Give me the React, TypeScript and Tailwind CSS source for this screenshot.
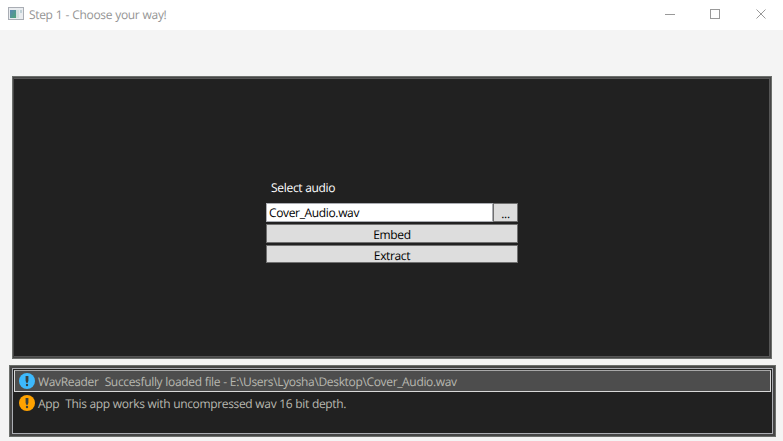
const font = "font-['Open_Sans','Noto_Sans',sans-serif] text-[12px] leading-4 whitespace-pre [text-rendering:geometricPrecision]";

function InfoIcon({ color }: { color: string }) {
  return (
    <svg width="16" height="16" viewBox="0 0 16 16" className="shrink-0">
      <circle cx="8" cy="8" r="8" fill={color} />
      <path d="M6.6 3h2.8v4.2L8.9 9.8H7.1L6.6 7.2z" fill="#38403f" />
      <circle cx="8" cy="12" r="1.2" fill="#38403f" />
    </svg>
  );
}

function WindowIcon() {
  return (
    <svg width="16" height="14" viewBox="0 0 16 14" className="shrink-0" shapeRendering="crispEdges">
      <defs>
        <linearGradient id="pane" x1="0" y1="0" x2="1" y2="1">
          <stop offset="0" stopColor="#5b86b5" />
          <stop offset="1" stopColor="#4fa577" />
        </linearGradient>
      </defs>
      <rect width="16" height="13" fill="#a9adb4" />
      <rect x="1" y="1" width="14" height="11" fill="#e9ecef" />
      <rect x="2" y="3" width="6" height="8" fill="url(#pane)" />
      <rect x="8" y="3" width="3" height="8" fill="#d5dfdf" />
      <rect x="12" y="3" width="2" height="3" fill="#bfd0d6" />
    </svg>
  );
}

function TitleBar() {
  return (
    <header className="flex h-[30px] items-start bg-white pl-2 text-[#949494]">
      <div className="pt-[7px]"><WindowIcon /></div>
      <h1 className={`${font} ml-[5px] mt-[7px] tracking-[-0.33px] [word-spacing:0.4px]`}>Step 1 - Choose your way!</h1>
      <svg width="102" height="10" viewBox="0 0 102 10" className="ml-auto mr-[16px] mt-[9px]" fill="none" stroke="#999">
        <path d="M0 5.5h10M45.5.5h9v9h-9z" shapeRendering="crispEdges" />
        <path d="M91.5.5l9 9M100.5.5l-9 9" />
      </svg>
    </header>
  );
}

export default function App() {
  return (
    <div className="flex h-[441px] w-[783px] flex-col overflow-hidden bg-[#f4f4f4]">
      <TitleBar />
      <main className="ml-3 mt-[46px] h-[283px] w-[760px] border border-[#6c6f6c] bg-[#212121]">
        <div className="h-full border border-[#464646]">
          <div className="h-full border border-l-0 border-[#565656] pl-[252px] pt-[101px]">
            <div className={`${font} h-[23px] pl-[5px] tracking-[-0.3px] text-white`}>Select audio</div>
            <div className="flex h-[19px] w-[252px]">
              <div className={`${font} w-[227px] border border-[#abadb3] bg-white pl-[2px] pt-px tracking-[-0.35px] text-black`}>Cover_Audio.wav</div>
              <button className={`${font} flex w-[25px] justify-center border border-[#707070] bg-[#ddd] pt-[2px] tracking-[-0.3px] text-black`}>...</button>
            </div>
            <button className={`${font} mt-[2px] flex h-[19px] w-[252px] justify-center border border-[#707070] bg-[#ddd] pt-[2px] tracking-[-0.35px] text-black`}>Embed</button>
            <button className={`${font} mt-[2px] flex h-[18px] w-[252px] justify-center border border-[#707070] bg-[#ddd] pt-[2px] tracking-[-0.35px] text-black`}>Extract</button>
          </div>
        </div>
      </main>
      <section className="ml-[9px] mt-[6px] h-[72px] w-[767px] border border-[#6c6f6c]">
        <div className="h-full border-2 border-[#464646]">
          <div className="h-full border border-[#abadb3] bg-[#212121] pl-px pr-px pt-px text-[#b8b8b0]">
            <div className="flex h-[22px] border border-[#d8d8d8] border-t-[#a8a8a8] bg-[#4d4d4d] pl-1 pt-[2px]">
              <InfoIcon color="#3db9fc" />
              <span className={`${font} ml-[3px] mt-px tracking-[-0.34px] [word-spacing:0.3px]`}>WavReader  Succesfully loaded file - E:\Users\Lyosha\Desktop\Cover_Audio.wav</span>
            </div>
            <div className="flex h-[22px] pl-[5px] pt-[3px]">
              <InfoIcon color="#ffa200" />
              <span className={`${font} ml-[3px] mt-px tracking-[-0.34px] [word-spacing:0.2px]`}>App  This app works with uncompressed wav 16 bit depth.</span>
            </div>
          </div>
        </div>
      </section>
    </div>
  );
}
